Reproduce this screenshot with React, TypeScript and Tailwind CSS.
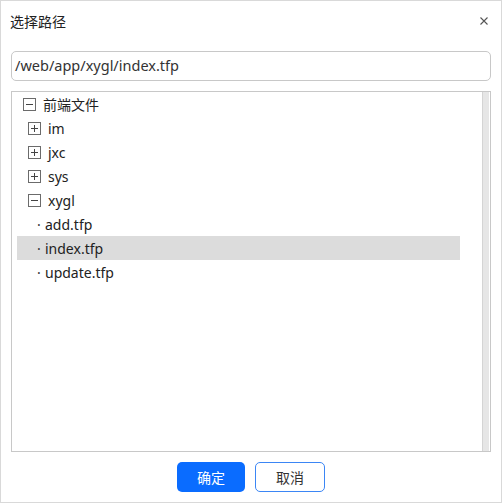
import React from 'react';

const FONT = { fontFamily: '"Noto Sans", "Noto Sans CJK SC", sans-serif' };

function ToggleBox({ open }: { open: boolean }) {
  return (
    <svg width="13" height="13" viewBox="0 0 13 13" className="shrink-0">
      <rect x="0.5" y="0.5" width="12" height="12" fill="white" stroke="#6b6b6b" />
      <line x1="3" y1="6.5" x2="10" y2="6.5" stroke="#444" />
      {!open && <line x1="6.5" y1="3" x2="6.5" y2="10" stroke="#444" />}
    </svg>
  );
}

type Row = { label: string; level: number; kind: 'open' | 'closed' | 'leaf'; selected?: boolean };

const rows: Row[] = [
  { label: '前端文件', level: 0, kind: 'open' },
  { label: 'im', level: 1, kind: 'closed' },
  { label: 'jxc', level: 1, kind: 'closed' },
  { label: 'sys', level: 1, kind: 'closed' },
  { label: 'xygl', level: 1, kind: 'open' },
  { label: 'add.tfp', level: 2, kind: 'leaf' },
  { label: 'index.tfp', level: 2, kind: 'leaf', selected: true },
  { label: 'update.tfp', level: 2, kind: 'leaf' },
];

function TreeRow({ row }: { row: Row }) {
  const base = row.level === 0 ? 'ml-0' : 'ml-[5px]';
  return (
    <div
      className={`${base} h-[24px] w-[443px] flex items-center text-[14px] text-[#222] ${
        row.selected ? 'bg-[#dcdcdc]' : ''
      }`}
    >
      {row.kind === 'leaf' ? (
        <>
          <span className="ml-[20px] w-[8px] text-[#333]">·</span>
          <span>{row.label}</span>
        </>
      ) : (
        <>
          <span className="ml-[11px] flex items-center">
            <ToggleBox open={row.kind === 'open'} />
          </span>
          <span className={row.level === 0 ? 'ml-[7px]' : 'ml-[7px]'}>{row.label}</span>
        </>
      )}
    </div>
  );
}

export default function App() {
  return (
    <div style={FONT} className="w-[502px] h-[503px] bg-white border border-[#d9d9d9] flex flex-col">
      <header className="h-[40px] flex items-center justify-between pl-[9px] pr-[13px]">
        <h1 className="text-[14px] text-[#222]">选择路径</h1>
        <svg width="8" height="8" viewBox="0 0 8 8">
          <path d="M0.5 0.5 L7.5 7.5 M7.5 0.5 L0.5 7.5" stroke="#555" strokeWidth="1.1" />
        </svg>
      </header>

      <div className="mx-[10px] mt-[10px] h-[30px] border border-[#c8c8c8] rounded-[5px] flex items-center px-[3px] text-[14.5px] text-[#333]">
        /web/app/xygl/index.tfp
      </div>

      <div className="mx-[10px] mt-[10px] h-[361px] border border-[#c8c8c8] flex">
        <div className="flex-1">
          {rows.map((r) => (
            <TreeRow key={r.label} row={r} />
          ))}
        </div>
        <div className="w-[7px] mr-[1px] bg-[#e6e6e6] border-l border-[#d4d4d4]" />
      </div>

      <footer className="mt-[10px] flex justify-center gap-[10px]">
        <button className="w-[68px] h-[30px] rounded-[5px] bg-[#0a6cff] text-white text-[14px]">确定</button>
        <button className="w-[70px] h-[30px] rounded-[5px] bg-white border border-[#3b86f5] text-[#333] text-[14px]">
          取消
        </button>
      </footer>
    </div>
  );
}
